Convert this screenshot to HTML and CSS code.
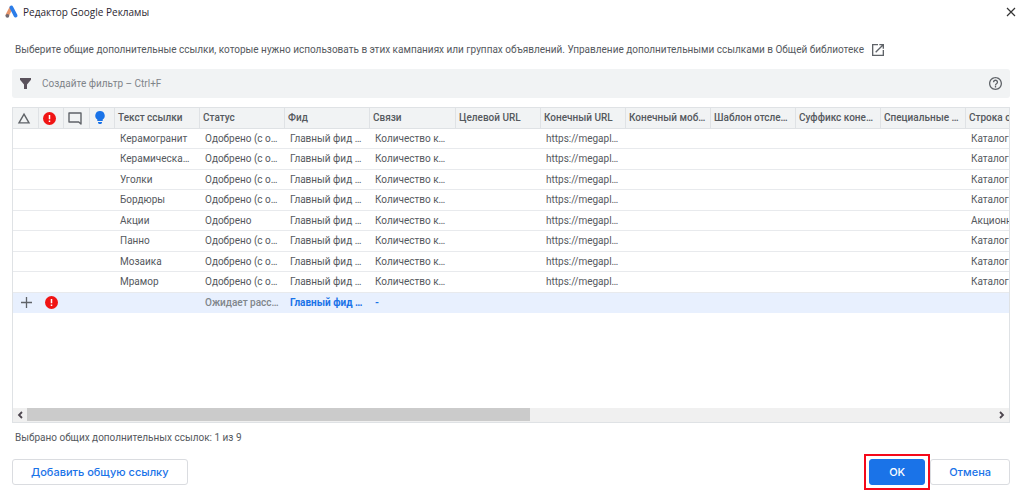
FILE: index.html
```html
<!DOCTYPE html>
<html lang="ru">
<head>
<meta charset="utf-8">
<meta name="viewport" content="width=device-width, initial-scale=1">
<title>Редактор Google Рекламы</title>
<link rel="stylesheet" href="styles.css">
</head>
<body>
<div class="window">
  <header class="titlebar">
    <svg class="logo" viewBox="0 0 14 14" aria-hidden="true">
      <path d="M6 3.2 2.4 10" stroke="#e8956a" stroke-width="3.6" stroke-linecap="round"/>
      <path d="M6.400 2.500 10.600 10.600" stroke="#2b7de9" stroke-width="3.800" stroke-linecap="round"/>
      <circle cx="2.400" cy="10.800" r="1.900" fill="#6f6a72"/>
    </svg>
    <h1 class="title">Редактор Google Рекламы</h1>
    <button class="icon-button close" type="button" aria-label="Закрыть">
      <svg viewBox="0 0 10 10" width="10" height="10"><path d="M1 1l8 8M9 1L1 9" stroke="#333" stroke-width="1.200" fill="none"/></svg>
    </button>
  </header>

  <main class="content">
    <p class="intro">
      <span>Выберите общие дополнительные ссылки, которые нужно использовать в этих кампаниях или группах объявлений. Управление дополнительными ссылками в Общей библиотеке</span>
      <a class="external" href="#" aria-label="Общая библиотека">
        <svg viewBox="3 3 18 18" width="12" height="12"><path fill="#5f6368" d="M19 19H5V5h7V3H3v18h18v-9h-2v7zM14 3v2h3.600l-9.800 9.800 1.400 1.400L19 6.400V10h2V3h-7z"/></svg>
      </a>
    </p>

    <div class="filter">
      <svg viewBox="0 0 11 12" width="11" height="12" aria-hidden="true"><path fill="#5a525c" d="M0 0h11v1.800L7 6.400V11H4V6.400L0 1.800z"/></svg>
      <input class="filter-input" type="text" aria-label="Фильтр" placeholder="Создайте фильтр – Ctrl+F">
      <button class="icon-button" type="button" aria-label="Справка">
        <svg viewBox="2 2 20 20" width="13" height="13"><path fill="#5f6368" d="M11 18h2v-2h-2v2zm1-16C6.480 2 2 6.480 2 12s4.480 10 10 10 10-4.480 10-10S17.520 2 12 2zm0 18c-4.410 0-8-3.590-8-8s3.590-8 8-8 8 3.590 8 8-3.590 8-8 8zm0-14c-2.210 0-4 1.790-4 4h2c0-1.100.9-2 2-2s2 .9 2 2c0 2-3 1.750-3 5h2c0-2.250 3-2.500 3-5 0-2.210-1.790-4-4-4z"/></svg>
      </button>
    </div>

    <div class="grid">
      <div class="viewport">
        <table class="links">
          <colgroup>
            <col class="c26"><col class="c25"><col class="c26"><col class="c25">
            <col class="c85"><col class="c85"><col class="c85"><col class="c86"><col class="c85"><col class="c85"><col class="c85"><col class="c85"><col class="c85"><col class="c85"><col class="c85">
          </colgroup>
          <thead>
            <tr>
              <th class="mark" aria-label="Изменения"><svg viewBox="0 0 12 11" width="12" height="11"><path d="M6 1.200 11 9.900H1z" fill="none" stroke="#5f6368" stroke-width="1.400"/></svg></th>
              <th class="mark" aria-label="Ошибки"><svg viewBox="0 0 13 13" width="13" height="13"><circle cx="6.500" cy="6.500" r="6.500" fill="#f01414"/><path d="M6.500 3v4.200M6.500 8.500v1.500" stroke="#fff" stroke-width="1.500"/></svg></th>
              <th class="mark" aria-label="Комментарии"><svg viewBox="0 0 14 13" width="14" height="13"><path d="M1 1h12v11l-2.300-2H1z" fill="none" stroke="#5f6368" stroke-width="1.400" stroke-linejoin="round"/></svg></th>
              <th class="mark" aria-label="Рекомендации"><svg viewBox="0 0 10 14" width="10" height="14"><path fill="#1a73e8" d="M5 0a4.600 4.600 0 0 0-2.700 8.400V10h5.400V8.400A4.600 4.600 0 0 0 5 0zM3 10.900h4v1L6 13H4l-1-1.100z"/></svg></th>
              <th>Текст ссылки</th><th>Статус</th><th>Фид</th><th>Связи</th><th>Целевой URL</th><th>Конечный URL</th><th>Конечный моб…</th><th>Шаблон отсле…</th><th>Суффикс коне…</th><th>Специальные …</th><th>Строка о</th>
            </tr>
          </thead>
          <tbody>
            <tr><td></td><td></td><td></td><td></td><td>Керамогранит</td><td>Одобрено (с о…</td><td>Главный фид …</td><td>Количество к…</td><td></td><td>https://megapl…</td><td></td><td></td><td></td><td></td><td>Каталог</td></tr>
            <tr><td></td><td></td><td></td><td></td><td>Керамическа…</td><td>Одобрено (с о…</td><td>Главный фид …</td><td>Количество к…</td><td></td><td>https://megapl…</td><td></td><td></td><td></td><td></td><td>Каталог</td></tr>
            <tr><td></td><td></td><td></td><td></td><td>Уголки</td><td>Одобрено (с о…</td><td>Главный фид …</td><td>Количество к…</td><td></td><td>https://megapl…</td><td></td><td></td><td></td><td></td><td>Каталог</td></tr>
            <tr><td></td><td></td><td></td><td></td><td>Бордюры</td><td>Одобрено (с о…</td><td>Главный фид …</td><td>Количество к…</td><td></td><td>https://megapl…</td><td></td><td></td><td></td><td></td><td>Каталог</td></tr>
            <tr><td></td><td></td><td></td><td></td><td>Акции</td><td>Одобрено</td><td>Главный фид …</td><td>Количество к…</td><td></td><td>https://megapl…</td><td></td><td></td><td></td><td></td><td>Акционн</td></tr>
            <tr><td></td><td></td><td></td><td></td><td>Панно</td><td>Одобрено (с о…</td><td>Главный фид …</td><td>Количество к…</td><td></td><td>https://megapl…</td><td></td><td></td><td></td><td></td><td>Каталог</td></tr>
            <tr><td></td><td></td><td></td><td></td><td>Мозаика</td><td>Одобрено (с о…</td><td>Главный фид …</td><td>Количество к…</td><td></td><td>https://megapl…</td><td></td><td></td><td></td><td></td><td>Каталог</td></tr>
            <tr><td></td><td></td><td></td><td></td><td>Мрамор</td><td>Одобрено (с о…</td><td>Главный фид …</td><td>Количество к…</td><td></td><td>https://megapl…</td><td></td><td></td><td></td><td></td><td>Каталог</td></tr>
            <tr class="selected">
              <td class="mark"><svg viewBox="0 0 11 11" width="11" height="11"><path d="M5.500 0v11M0 5.500h11" stroke="#5f6368" stroke-width="1.300"/></svg></td>
              <td class="mark"><svg viewBox="0 0 13 13" width="13" height="13"><circle cx="6.500" cy="6.500" r="6.500" fill="#f01414"/><path d="M6.500 3v4.200M6.500 8.500v1.500" stroke="#fff" stroke-width="1.500"/></svg></td>
              <td></td><td></td><td></td><td class="pending">Ожидает расс…</td><td class="changed">Главный фид …</td><td class="changed">-</td><td></td><td></td><td></td><td></td><td></td><td></td><td></td>
            </tr>
          </tbody>
        </table>
      </div>
      <div class="scrollbar">
        <button class="arrow" type="button" aria-label="Прокрутить влево"><svg viewBox="0 0 6 8" width="6" height="8"><path d="M5 1 2 4l3 3" fill="none" stroke="#4d464f" stroke-width="1.800"/></svg></button>
        <div class="track"><div class="thumb"></div></div>
        <button class="arrow" type="button" aria-label="Прокрутить вправо"><svg viewBox="0 0 6 8" width="6" height="8"><path d="M1 1l3 3-3 3" fill="none" stroke="#4d464f" stroke-width="1.800"/></svg></button>
      </div>
    </div>

    <p class="count">Выбрано общих дополнительных ссылок: 1 из 9</p>

    <footer class="actions">
      <button class="button add" type="button">Добавить общую ссылку</button>
      <div class="highlight"><button class="button primary" type="button">OK</button></div>
      <button class="button cancel" type="button">Отмена</button>
    </footer>
  </main>
</div>
</body>
</html>
```

FILE: styles.css
```css
* { box-sizing: border-box; }

body {
  margin: 0;
  background: #fff;
  color: #55595e;
  font: 10px/16px Roboto, "Liberation Sans", sans-serif;
}

button, input { font: inherit; color: inherit; }
svg { display: block; flex: none; overflow: visible; }

.window {
  display: flex;
  flex-direction: column;
  min-height: 100vh;
}

.titlebar {
  display: flex;
  align-items: center;
  gap: 4px;
  height: 24px;
  padding: 0 8px 0 5px;
}

.logo { width: 14px; height: 14px; }

.title {
  margin: 0;
  flex: 1;
  color: #2b2630;
  font: 400 10px/16px "Open Sans", "Noto Sans", sans-serif;
}

.icon-button {
  display: flex;
  padding: 0;
  border: 0;
  background: none;
}

.content {
  flex: 1;
  display: flex;
  flex-direction: column;
  padding: 18px 14px 10px 12px;
}

.intro {
  display: flex;
  align-items: center;
  gap: 8px;
  margin: 0 0 11px;
  padding-left: 3px;
}

.filter {
  display: flex;
  align-items: center;
  gap: 11px;
  height: 29px;
  margin-bottom: 9px;
  padding: 0 8px;
  border-radius: 3px;
  background: #f1f3f4;
}

.filter-input {
  flex: 1;
  min-width: 0;
  padding: 0;
  border: 0;
  outline: 0;
  background: none;
}

.filter-input::placeholder { color: #7f8489; opacity: 1; }

.grid {
  flex: 1;
  display: flex;
  flex-direction: column;
  border: 1px solid #dfe2e5;
}

.viewport { flex: 1; overflow: hidden; }

.links {
  width: 1038px;
  border-collapse: separate;
  border-spacing: 0;
  table-layout: fixed;
}

.c25 { width: 25px; }
.c26 { width: 26px; }
.c85 { width: 85px; }
.c86 { width: 86px; }

.links th, .links td {
  height: 20px;
  padding: 0 0 0 5px;
  border-bottom: 1px solid #e8eaed;
  text-align: left;
  line-height: 16px;
  white-space: nowrap;
  overflow: hidden;
}

.links tbody tr:nth-child(even) td { height: 21px; }

.links th {
  height: 21px;
  padding-left: 3px;
  border-right: 1px solid #dfe2e5;
  border-bottom-color: #dfe2e5;
  background: #f1f3f4;
  font-weight: 500;
}

.links .mark { padding: 0; }
.links th.mark { padding-right: 4px; }
.links .mark svg { margin: 0 auto; }
.links .selected td { border-color: #e8f0fe; background: #e8f0fe; }
.links .pending { color: #80868b; font-weight: 500; }
.links .changed { color: #1a73e8; font-weight: 700; }

.scrollbar {
  display: flex;
  height: 14px;
  background: #f0f0f0;
}

.arrow {
  display: grid;
  place-items: center;
  width: 14px;
  padding: 0;
  border: 0;
  background: none;
}

.track { flex: 1; padding-bottom: 1px; }
.thumb { width: 52%; height: 100%; background: #cbcbcb; }

.count { margin: 7px 0 13px; padding-left: 3px; }

.actions {
  display: flex;
  align-items: center;
}

.button {
  height: 26px;
  padding: 0 18px;
  border: 1px solid #dadce0;
  border-radius: 3px;
  background: #fff;
  color: #1a73e8;
  font: 500 11px/16px Inter, "Open Sans", sans-serif;
}

.add { margin-right: auto; }
.primary { padding: 0 19px; border-color: #1a73e8; background: #1a73e8; color: #fff; }

.highlight {
  margin: -5px 0;
  padding: 3px;
  border: 2px solid #f5091a;
}
```
